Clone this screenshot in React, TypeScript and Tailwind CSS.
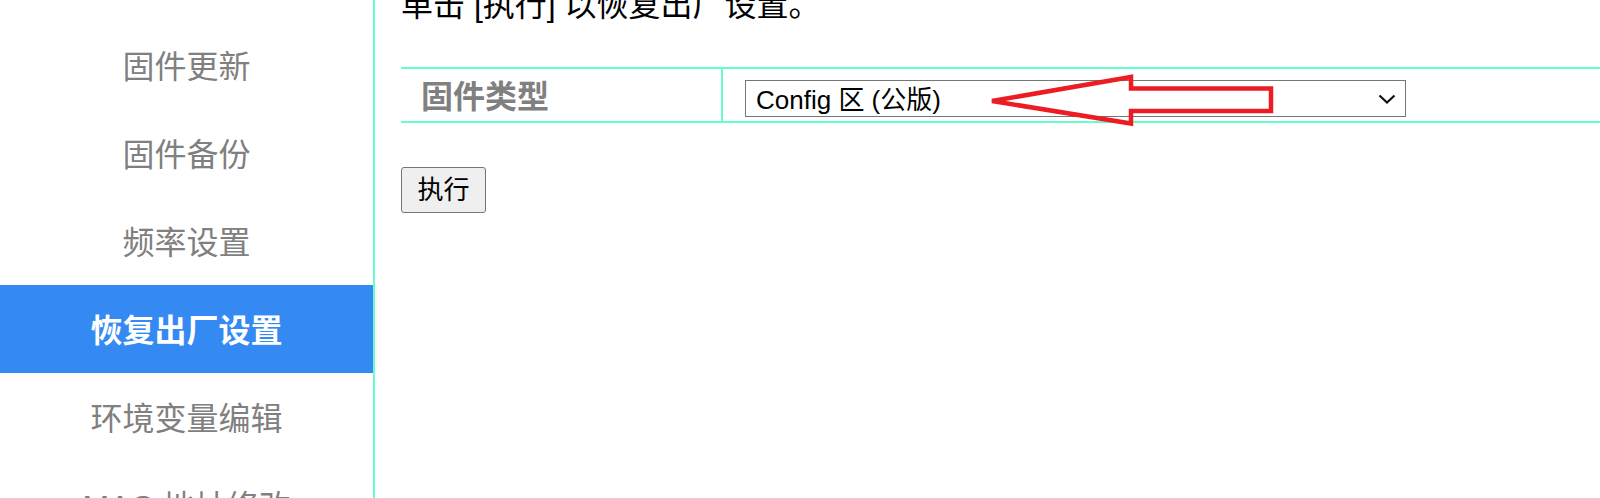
import React from "react";

const items = ["固件更新", "固件备份", "频率设置", "恢复出厂设置", "环境变量编辑", "MAC 地址修改"];

export default function App() {
  return (
    <div className="relative flex h-[498px] w-full overflow-hidden bg-white font-['Liberation_Sans','Noto_Sans_CJK_SC',sans-serif]">
      <div className="flex w-[375px] shrink-0 flex-col border-r-2 border-[#66ffcc] pt-[21px]">
        {items.map((t) => {
          const active = t === "恢复出厂设置";
          return (
            <div
              key={t}
              className={
                active
                  ? "flex h-[88px] shrink-0 items-center justify-center bg-[#3489f2] pt-[3px] text-[32px] font-bold text-white"
                  : "flex h-[88px] shrink-0 items-center justify-center pt-[3px] text-[32px] text-[#808080]"
              }
            >
              {t}
            </div>
          );
        })}
      </div>
      <div className="flex min-w-0 flex-1 flex-col pl-[26px]">
        <p className="-mt-[11px] text-[32px] leading-[32px] text-black">单击 [执行] 以恢复出厂设置。</p>
        <div className="mt-[46px] flex border-y-2 border-[#66ffcc]">
          <div className="flex w-[322px] shrink-0 items-center border-r-2 border-[#66ffcc] pl-[20px] pt-[3px] text-[32px] font-bold text-[#808080]">
            固件类型
          </div>
          <div className="flex-1 pb-[4px] pl-[22px] pt-[11px]">
            <div className="relative h-[37px] w-[661px]">
              <select className="h-[37px] w-[661px] appearance-none rounded-none border border-[#767676] bg-white pl-[10px] text-[26px] text-black outline-none">
                <option>Config 区 (公版)</option>
              </select>
              <svg
                className="pointer-events-none absolute right-[10px] top-[14px]"
                width="18"
                height="10"
                viewBox="0 0 18 10"
              >
                <path d="M1.5 1.5 L9 8.5 L16.5 1.5" fill="none" stroke="#111" strokeWidth="2.2" />
              </svg>
            </div>
          </div>
        </div>
        <div className="mt-[44px]">
          <button className="flex h-[46px] w-[85px] items-center justify-center rounded-[3px] border border-[#767676] bg-[#efefef] text-[26px] text-black">
            执行
          </button>
        </div>
      </div>
      <svg className="pointer-events-none absolute left-0 top-0" width="1600" height="498">
        <polygon
          points="992,101 1131,77 1131,88.5 1271,88.5 1271,111 1131,111 1131,123.5"
          fill="none"
          stroke="#ed1c24"
          strokeWidth="4.5"
          strokeLinejoin="miter"
        />
      </svg>
    </div>
  );
}
